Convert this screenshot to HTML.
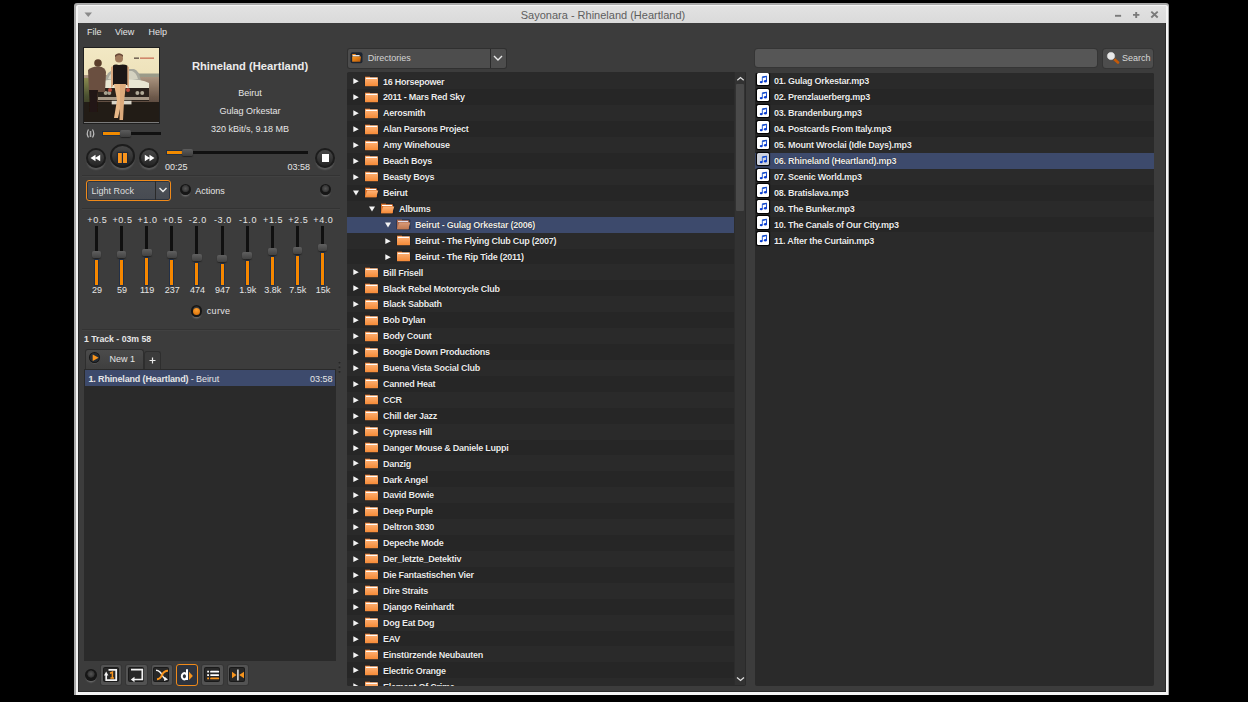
<!DOCTYPE html>
<html><head><meta charset="utf-8">
<style>
*{margin:0;padding:0;box-sizing:border-box}
html,body{width:1248px;height:702px;overflow:hidden;background:#000;font-family:"Liberation Sans",sans-serif;color:#e6e6e6}
.a{position:absolute}
#win{position:absolute;left:74px;top:3px;width:1095px;height:692px;background:#a9a9a9;border-radius:3px 3px 0 0}
#wwhite{position:absolute;left:76px;top:5px;width:1092px;height:690px;background:#f4f4f4;border-radius:2px 2px 0 0}
#tb{position:absolute;left:78px;top:6px;width:1088px;height:17px;background:linear-gradient(#e2e2e2,#dadada)}
#title{position:absolute;left:74px;top:4.8px;width:1058px;height:20px;line-height:20px;text-align:center;font-size:11px;color:#5e5e5e}
#cframe{position:absolute;left:78px;top:23px;width:1088px;height:669px;background:#2b2b2b}
#content{position:absolute;left:79px;top:23px;width:1086px;height:668px;background:#3c3c3c}
.menu{position:absolute;top:26px;font-size:9px;color:#e6e6e6;line-height:12px}
.t9{font-size:9px;line-height:12px;position:absolute;white-space:nowrap}
.sep{position:absolute;height:1px;background:#333;box-shadow:0 1px 0 #414141}
/* buttons */
.rb{position:absolute;border-radius:50%;background:linear-gradient(#474747,#3a3a3a 45%,#242424);border:2.3px solid #1c1c1c;box-shadow:0 2.5px 1.5px -0.5px #5a5a5a}
.slt{position:absolute;height:3px;background:#111}
.slo{position:absolute;height:3px;background:#f08a00;box-shadow:0 0 0 1px #223044}
.slh{position:absolute;width:11px;height:7px;border-radius:2px;background:linear-gradient(#5c5c5c,#3e3e3e);box-shadow:0 1px 1px #222}
.eql,.eqf{position:absolute;width:30px;text-align:center;font-size:9px;line-height:10px;white-space:nowrap}
.eql{top:215px;letter-spacing:0.6px}
.eqf{top:285px}
.eqt{position:absolute;top:226px;width:3px;height:59px;background:#101010}
.eqo{position:absolute;width:3px;background:#f58700;box-shadow:0 0 0 1px #223048}
.eqh{position:absolute;width:9.5px;height:7px;border-radius:2px;background:linear-gradient(#606060,#424242);box-shadow:0 1px 1px #252525}
.radio{position:absolute;width:11.5px;height:11.5px;border-radius:50%;background:radial-gradient(circle at 50% 42%,#545454 0,#3c3c3c 2.6px,#333 3.3px,#161616 3.9px,#161616 100%);box-shadow:0 2.5px 1.5px -1px #6a6a6a}
/* tree */
#tree{position:absolute;left:347px;top:72px;width:399px;height:613.7px;background:#2a2a2a;overflow:hidden;border-radius:2px}
#tree .rows{position:absolute;left:0;top:1.4px;width:387px;height:613px;overflow:hidden}
.row{position:absolute;left:0;width:100%;height:15.92px;font-weight:bold;font-size:9px;letter-spacing:-0.25px;line-height:15.92px;white-space:nowrap}
.row.ev{background:#2a2a2a}
.row.od{background:#262626}
.row.sel{background:#3d4a6c}
.row span{position:absolute;top:1.2px;color:#ebebeb;text-shadow:0 0 1px #000}
.ar{position:absolute;top:5px}
.ad{position:absolute;top:5.5px}
.fd{position:absolute;top:1.5px}
#vsb{position:absolute;left:387px;top:0;width:12px;height:613px;background:#323232;box-shadow:inset 1px 0 0 #2c2c2c,inset -1px 0 0 #2a2a2a}
#vsh{position:absolute;left:1.8px;top:11.5px;width:8px;height:127.5px;background:#4a4a4a;border-radius:1px}
/* file list */
#flist{position:absolute;left:755px;top:72.5px;width:398.5px;height:613px;background:#2a2a2a;border-radius:2px;overflow:hidden}
.mi{position:absolute;left:1.7px;top:-0.3px;width:12.6px;height:12.4px;background:#fff;border-radius:1.5px;box-shadow:0 0 1px 0.5px #000}
.mi svg{position:absolute;left:0;top:0}
.mis{background:#d4d8e0}
.mis{background:#cfd3dd}
#flist .row span{left:19px}
.bb{position:absolute;top:664.8px;width:20.5px;height:20.2px;background:#535353;border-radius:2px;box-shadow:0 0 0 1px #363636}
.bi{position:absolute;top:667.5px;width:14px;height:13.5px;background:#282828;border-radius:1px;box-shadow:0 0 0 1px #1a1a1a}
</style></head><body>
<svg width="0" height="0" style="position:absolute">
 <defs>
  <linearGradient id="fg" x1="0" y1="0" x2="0" y2="1"><stop offset="0" stop-color="#ffb378"/><stop offset="1" stop-color="#f58a36"/></linearGradient>
  <linearGradient id="fgs" x1="0" y1="0" x2="0" y2="1"><stop offset="0" stop-color="#d99a78"/><stop offset="1" stop-color="#c07850"/></linearGradient>
  <linearGradient id="ng" x1="0" y1="0" x2="1" y2="1"><stop offset="0" stop-color="#5a8ae8"/><stop offset="1" stop-color="#0838c0"/></linearGradient>
  <symbol id="mn" viewBox="0 0 13 13"><g transform="translate(2,1.6) scale(0.78)"><path d="M4.3 9.3 V3.4 L9.6 2.2 V8.2" stroke="url(#ng)" stroke-width="1.4" fill="none"/><path d="M4.3 3.4 L9.6 2.2" stroke="#1248c8" stroke-width="1.8"/><ellipse cx="2.9" cy="9.6" rx="1.9" ry="1.5" fill="#0a3ed0"/><ellipse cx="8.2" cy="8.5" rx="1.9" ry="1.5" fill="#0a3ed0"/></g></symbol>
  <symbol id="ar" viewBox="0 0 7 7"><path d="M0.3 0.3 L5.8 3.2 L0.3 6.1 Z" fill="#f4f4f4"/></symbol>
  <symbol id="ad" viewBox="0 0 7 7"><path d="M0 0.6 H6 L3 5.6 Z" fill="#f4f4f4"/></symbol>
  <symbol id="fc" viewBox="0 0 15 13"><rect x="0.3" y="1.2" width="14.2" height="10.6" rx="1.5" fill="#151c28" opacity="0.7"/><rect x="1" y="1.6" width="5" height="2" fill="#d8691e"/><rect x="1" y="2.3" width="13" height="9" rx="0.6" fill="url(#fg)"/><rect x="2" y="2.9" width="11" height="1.1" fill="#fff" opacity="0.95"/></symbol>
  <symbol id="fo" viewBox="0 0 15 13"><rect x="0.3" y="1.2" width="14.2" height="10.6" rx="1.5" fill="#151c28" opacity="0.7"/><rect x="1" y="1.6" width="5" height="2" fill="#d8691e"/><rect x="1" y="2.3" width="12" height="9" rx="0.6" fill="#d8702a"/><rect x="2" y="2.9" width="10" height="1.1" fill="#fff"/><path d="M3.2 4.6 H14.3 L12.2 11.3 H1 Z" fill="url(#fg)"/></symbol>
  <symbol id="fos" viewBox="0 0 15 13"><rect x="0.3" y="1.2" width="14.2" height="10.6" rx="1.5" fill="#151c28" opacity="0.5"/><rect x="1" y="1.6" width="5" height="2" fill="#a86a50"/><rect x="1" y="2.3" width="12" height="9" rx="0.6" fill="#a86a50"/><rect x="2" y="2.9" width="10" height="1.1" fill="#dde"/><path d="M3.2 4.6 H14.3 L12.2 11.3 H1 Z" fill="url(#fgs)"/></symbol>
 </defs>
</svg>
<div id="win"></div>
<div id="wwhite"></div>
<div id="tb"></div>
<div id="title">Sayonara - Rhineland (Heartland)</div>
<svg class="a" style="left:84px;top:11.7px" width="9" height="6"><path d="M0.5 0.5 H8 L4.25 5 Z" fill="#8a8a8a"/></svg>
<svg class="a" style="left:1112px;top:9px" width="50" height="12">
 <path d="M3 6.8 H9.1" stroke="#7a7a7a" stroke-width="1.9"/>
 <path d="M21 5.9 H27.4 M24.2 2.9 V8.9" stroke="#7a7a7a" stroke-width="1.9"/>
 <path d="M39.3 2.6 L45.7 8.5 M45.7 2.6 L39.3 8.5" stroke="#7a7a7a" stroke-width="1.9"/>
</svg>
<div id="cframe"></div>
<div id="content"></div>

<div class="menu" style="left:87px">File</div>
<div class="menu" style="left:115px">View</div>
<div class="menu" style="left:148.5px">Help</div>

<!-- album cover -->
<div class="a" style="left:83px;top:47px;width:77px;height:77px;background:#1f1f1f"></div>
<svg class="a" style="left:84px;top:48px" width="75" height="75" viewBox="0 0 75 75">
 <defs>
  <linearGradient id="sky" x1="0" y1="0" x2="0" y2="1"><stop offset="0" stop-color="#f2e8c4"/><stop offset="1" stop-color="#e6d7a8"/></linearGradient>
  <linearGradient id="road" x1="0" y1="0" x2="0" y2="1"><stop offset="0" stop-color="#b09a84"/><stop offset="0.45" stop-color="#6e5a4c"/><stop offset="1" stop-color="#2a1e16"/></linearGradient>
  <linearGradient id="grass" x1="0" y1="0" x2="0" y2="1"><stop offset="0" stop-color="#8a8a50"/><stop offset="0.4" stop-color="#4a5030"/><stop offset="1" stop-color="#1e1a12"/></linearGradient>
  <filter id="bl" x="-10%" y="-10%" width="120%" height="120%"><feGaussianBlur stdDeviation="0.7"/></filter>
 </defs>
 <rect width="75" height="75" fill="url(#sky)"/>
 <g filter="url(#bl)">
 <rect x="0" y="27" width="75" height="48" fill="url(#road)"/>
 <rect x="50" y="25.5" width="25" height="3.5" fill="#9a9a88"/>
 <rect x="0" y="30" width="10" height="45" fill="url(#grass)"/>
 <rect x="0" y="54" width="75" height="21" fill="#231a12"/>
 <path d="M21 33 Q23 22 32 21 L50 21 Q55 22 57 33 Z" fill="#a8a89c"/>
 <path d="M24 31 Q26 24 33 23 L48 23 Q52 24 54 31 Z" fill="#d4d2c0"/>
 <path d="M15 34 Q24 31 40 31 Q58 31 65 35 L65 41 L15 41 Z" fill="#e8e6d2"/>
 <rect x="14" y="40" width="51" height="13" fill="#2a201a"/>
 <circle cx="21.7" cy="45" r="2" fill="#a8a290"/><circle cx="25.3" cy="45" r="2" fill="#a8a290"/>
 <circle cx="53.4" cy="45" r="2" fill="#b0aa98"/><circle cx="58.2" cy="45" r="2" fill="#b0aa98"/>
 <rect x="14" y="49" width="51" height="3" fill="#a89a88"/>
 <rect x="27.7" y="52.8" width="19.8" height="3.6" fill="#d8d4c8"/>
 <path d="M4 22 Q8 18 15 18.5 Q21 19 22 24 L21 44 L5 44 Z" fill="#6a5040"/>
 <circle cx="14" cy="15" r="3.8" fill="#5a3e2c"/>
 <path d="M5 42 L14 42 L13 64 L6 64 Z" fill="#241812"/>
 <path d="M27 19 L29 18 L29 38 L27 40 Z M43 18 L45 19 L45 40 L43 38 Z" fill="#d8a880"/>
 <path d="M29 17.5 Q31 16 35 17 Q40 16 43.3 17.5 L43.3 36.7 Q36 39 29 36.7 Z" fill="#1c1412"/>
 <circle cx="35" cy="10.5" r="4" fill="#a07a5c"/>
 <path d="M31 9.5 Q35 5 39 9 L39 7 Q35 3.5 31 7 Z" fill="#6a4a38"/>
 <circle cx="26" cy="42" r="2" fill="#b84a3a"/><circle cx="44" cy="42" r="2" fill="#b84a3a"/>
 <path d="M30 36 L37 36 L38 52 L34 70 L30 70 L33 52 Z" fill="#e8b888"/>
 <path d="M36 36 L42 36 L40 54 L39 72 L35.5 72 L36 54 Z" fill="#dcaa7c"/>
 </g>
 <rect x="50" y="9.5" width="5" height="1.3" fill="#5a4a40"/>
 <rect x="56" y="9.5" width="14" height="1.3" fill="#c87058"/>
</svg>
<div class="a" style="left:84px;top:122px;width:75px;height:1px;background:#7a7a7a"></div>

<div class="a" style="left:170px;top:58.8px;width:160px;text-align:center;font-size:11.2px;font-weight:bold;line-height:14px;color:#ececec">Rhineland (Heartland)</div>
<div class="t9" style="left:170px;top:87px;width:160px;text-align:center">Beirut</div>
<div class="t9" style="left:170px;top:105px;width:160px;text-align:center">Gulag Orkestar</div>
<div class="t9" style="left:170px;top:123px;width:160px;text-align:center">320 kBit/s, 9.18 MB</div>

<!-- volume -->
<svg class="a" style="left:85px;top:128px" width="11" height="11"><path d="M3.5 1.5 Q1 5.5 3.5 9.5 M7.5 1.5 Q10 5.5 7.5 9.5" stroke="#bbb" stroke-width="1.2" fill="none"/><rect x="4.7" y="3" width="1.6" height="6" fill="#aaa"/></svg>
<div class="slt" style="left:103px;top:132px;width:58px"></div>
<div class="slo" style="left:103px;top:132px;width:17px"></div>
<div class="slh" style="left:119.5px;top:130px"></div>

<!-- controls -->
<div class="rb" style="left:86px;top:147.5px;width:20px;height:20px"></div>
<svg class="a" style="left:89px;top:153px" width="14" height="10"><path d="M1.5 5 L6.5 1.8 V8.2 Z M6 5 L11.2 1.8 V8.2 Z" fill="#fff"/></svg>
<div class="rb" style="left:109.7px;top:144.2px;width:25.5px;height:24px"></div>
<div class="a" style="left:117.5px;top:153.2px;width:4.2px;height:9.5px;background:#f7941d;box-shadow:0 0 1.5px 1px #1a2538"></div>
<div class="a" style="left:123px;top:153.2px;width:4.2px;height:9.5px;background:#f7941d;box-shadow:0 0 1.5px 1px #1a2538"></div>
<div class="rb" style="left:139px;top:147.5px;width:20px;height:20px"></div>
<svg class="a" style="left:143px;top:153px" width="14" height="10"><path d="M1.8 1.8 L7 5 L1.8 8.2 Z M6.5 1.8 L11.5 5 L6.5 8.2 Z" fill="#fff"/></svg>

<div class="slt" style="left:166.5px;top:150.5px;width:141px"></div>
<div class="slo" style="left:166.5px;top:150.5px;width:15px"></div>
<div class="slh" style="left:182px;top:148.5px"></div>
<div class="t9" style="left:165px;top:161px;">00:25</div>
<div class="t9" style="left:287.5px;top:161px;">03:58</div>

<div class="rb" style="left:315px;top:147.5px;width:20px;height:20px"></div>
<div class="a" style="left:321.5px;top:154px;width:7.5px;height:7.5px;background:#fff"></div>

<div class="sep" style="left:82px;top:175px;width:258px"></div>

<!-- preset combo -->
<div class="a" style="left:86px;top:180px;width:85px;height:21px;border:1.2px solid #f08a1a;border-radius:3px;background:linear-gradient(#4d5157,#474b52);box-shadow:inset 0 0 0 1px #2c3440"></div>
<div class="a" style="left:155px;top:181px;width:1px;height:19px;background:#2a2a2a"></div>
<svg class="a" style="left:158px;top:186px" width="10" height="8"><path d="M1.5 2 L5 5.5 L8.5 2" stroke="#eee" stroke-width="1.4" fill="none"/></svg>
<div class="t9" style="left:91.5px;top:184.5px;color:#dedede">Light Rock</div>
<div class="radio" style="left:179.7px;top:183.5px"></div>
<div class="t9" style="left:195.3px;top:184.5px">Actions</div>
<div class="radio" style="left:319.8px;top:183.5px"></div>
<div class="sep" style="left:82px;top:207.5px;width:258px"></div>

<div class="eql" style="left:82.40px">+0.5</div>
<div class="eqt" style="left:95.00px"></div>
<div class="eqo" style="left:95.00px;top:259.6px;height:25.4px"></div>
<div class="eqh" style="left:91.80px;top:250.6px"></div>
<div class="eqf" style="left:82.00px">29</div>
<div class="eql" style="left:107.51px">+0.5</div>
<div class="eqt" style="left:120.11px"></div>
<div class="eqo" style="left:120.11px;top:259.6px;height:25.4px"></div>
<div class="eqh" style="left:116.91px;top:250.6px"></div>
<div class="eqf" style="left:107.11px">59</div>
<div class="eql" style="left:132.62px">+1.0</div>
<div class="eqt" style="left:145.22px"></div>
<div class="eqo" style="left:145.22px;top:257.8px;height:27.2px"></div>
<div class="eqh" style="left:142.02px;top:248.8px"></div>
<div class="eqf" style="left:132.22px">119</div>
<div class="eql" style="left:157.73px">+0.5</div>
<div class="eqt" style="left:170.33px"></div>
<div class="eqo" style="left:170.33px;top:259.6px;height:25.4px"></div>
<div class="eqh" style="left:167.13px;top:250.6px"></div>
<div class="eqf" style="left:157.33px">237</div>
<div class="eql" style="left:182.84px">-2.0</div>
<div class="eqt" style="left:195.44px"></div>
<div class="eqo" style="left:195.44px;top:262.9px;height:22.1px"></div>
<div class="eqh" style="left:192.24px;top:253.9px"></div>
<div class="eqf" style="left:182.44px">474</div>
<div class="eql" style="left:207.95px">-3.0</div>
<div class="eqt" style="left:220.55px"></div>
<div class="eqo" style="left:220.55px;top:263.9px;height:21.1px"></div>
<div class="eqh" style="left:217.35px;top:254.9px"></div>
<div class="eqf" style="left:207.55px">947</div>
<div class="eql" style="left:233.06px">-1.0</div>
<div class="eqt" style="left:245.66px"></div>
<div class="eqo" style="left:245.66px;top:261.1px;height:23.9px"></div>
<div class="eqh" style="left:242.46px;top:252.1px"></div>
<div class="eqf" style="left:232.66px">1.9k</div>
<div class="eql" style="left:258.17px">+1.5</div>
<div class="eqt" style="left:270.77px"></div>
<div class="eqo" style="left:270.77px;top:257.1px;height:27.9px"></div>
<div class="eqh" style="left:267.57px;top:248.1px"></div>
<div class="eqf" style="left:257.77px">3.8k</div>
<div class="eql" style="left:283.28px">+2.5</div>
<div class="eqt" style="left:295.88px"></div>
<div class="eqo" style="left:295.88px;top:255.8px;height:29.2px"></div>
<div class="eqh" style="left:292.68px;top:246.8px"></div>
<div class="eqf" style="left:282.88px">7.5k</div>
<div class="eql" style="left:308.39px">+4.0</div>
<div class="eqt" style="left:320.99px"></div>
<div class="eqo" style="left:320.99px;top:252.8px;height:32.2px"></div>
<div class="eqh" style="left:317.79px;top:243.8px"></div>
<div class="eqf" style="left:307.99px">15k</div>

<div class="radio" style="left:190.9px;top:305.3px"></div>
<div class="a" style="left:193.1px;top:307.5px;width:7px;height:7px;border-radius:50%;background:radial-gradient(circle at 50% 30%,#ffa030,#e07a10 70%,#b85a08)"></div>
<div class="t9" style="left:206.8px;top:305.3px;letter-spacing:0.3px">curve</div>
<div class="sep" style="left:82px;top:329px;width:258px"></div>

<div class="t9" style="left:84px;top:333px;font-weight:bold;font-size:8.7px">1 Track - 03m 58</div>

<!-- tabs -->
<div class="a" style="left:84.5px;top:349.3px;width:59px;height:20px;background:linear-gradient(#4b4b4b,#3f3f3f);border:1px solid #2e2e2e;border-bottom:none;border-radius:3px 3px 0 0"></div>
<div class="a" style="left:89.3px;top:352.3px;width:11.2px;height:11.2px;border-radius:50%;background:radial-gradient(circle,#28303a 0,#232a33 55%,#141414 65%,#141414 100%);box-shadow:0 1.5px 1px -0.5px #555"></div>
<svg class="a" style="left:92px;top:354px" width="8" height="8"><path d="M0.7 0.6 L6.6 3.8 L0.7 7 Z" fill="#f7941d"/></svg>
<div class="t9" style="left:109.6px;top:353px">New 1</div>
<div class="a" style="left:143.9px;top:351px;width:17.5px;height:18.5px;background:#3b3b3b;border:1px solid #2e2e2e;border-bottom:none;border-radius:3px 3px 0 0"></div>
<svg class="a" style="left:149px;top:357px" width="7" height="7"><path d="M3.5 0.5 V6.5 M0.5 3.5 H6.5" stroke="#e8e8e8" stroke-width="1.2"/></svg>

<!-- playlist -->
<div class="a" style="left:84px;top:369px;width:252px;height:291.5px;background:#2a2a2a"></div>
<div class="a" style="left:85px;top:370px;width:249.5px;height:16px;background:#3d4a6c"></div>
<div class="t9" style="left:88.5px;top:372.5px;font-size:9px;letter-spacing:-0.1px"><b style="letter-spacing:-0.15px">1. Rhineland (Heartland)</b> - Beirut</div>
<div class="t9" style="left:272.5px;width:60px;text-align:right;top:372.5px;font-size:9px">03:58</div>
<svg class="a" style="left:337px;top:360px" width="5" height="14"><circle cx="2.5" cy="1.6" r="0.9" fill="#4a4a4a"/><circle cx="2.5" cy="2.6" r="1" fill="#262626"/><circle cx="2.5" cy="6.2" r="0.9" fill="#4a4a4a"/><circle cx="2.5" cy="7.2" r="1" fill="#262626"/><circle cx="2.5" cy="10.8" r="0.9" fill="#4a4a4a"/><circle cx="2.5" cy="11.8" r="1" fill="#262626"/></svg>

<!-- bottom buttons -->
<div class="radio" style="left:85.3px;top:669.3px"></div>
<div class="bb" style="left:100.5px"></div><div class="bi" style="left:103.5px"></div>
<div class="bb" style="left:126px"></div><div class="bi" style="left:128.5px"></div>
<div class="bb" style="left:151.5px"></div><div class="bi" style="left:154px"></div>
<div class="a" style="left:176.2px;top:664.2px;width:22.2px;height:21.8px;background:#2e343e;border:1.2px solid #f08a1a;border-radius:3px"></div>
<div class="bb" style="left:202.2px"></div><div class="bi" style="left:205px"></div>
<div class="bb" style="left:227.8px"></div><div class="bi" style="left:230.4px"></div>
<svg class="a" style="left:100px;top:660px" width="150" height="30">
 <path d="M8.5 9.8 H16.2 V20.2 H6.2 V14" stroke="#f4f4f4" stroke-width="1.7" fill="none"/>
 <path d="M4 15.5 L6.2 11.5 L8.4 15.5 Z" fill="#f4f4f4"/>
 <path d="M10 13.2 L12.4 12.2 V18 M10.4 18 H14" stroke="#f7941d" stroke-width="1.5" fill="none"/>
 <path d="M31 9.7 H42.3 V19.5 H34" stroke="#f4f4f4" stroke-width="1.7" fill="none"/>
 <path d="M34.5 16.8 L30.8 19.5 L34.5 22.2 Z" fill="#f4f4f4"/>
 <path d="M56 10.3 Q60 10.5 62 15 Q64 18.8 66 19" stroke="#f4f4f4" stroke-width="1.5" fill="none"/>
 <path d="M64.5 16.8 L68 19.5 L64 21 Z" fill="#f4f4f4"/>
 <path d="M57 19.2 Q60.5 19 62 15 Q63.8 10.8 68 10.8" stroke="#f7941d" stroke-width="2" fill="none"/>
 <path d="M87 9.3 V20 M87 16.3 A2.6 3.1 0 1 1 87 16.2" stroke="#fff" stroke-width="2" fill="none"/>
 <path d="M89 11.8 L92.9 16 L89 20 Z" fill="#f7941d"/>
 <path d="M107.2 11.7 H109 M107.2 15.1 H109" stroke="#fff" stroke-width="1.8"/>
 <path d="M111 11.7 H118.3 M111 15.1 H118.3" stroke="#fff" stroke-width="1.8" stroke-linecap="round"/>
 <path d="M107.2 18.4 H109" stroke="#f7941d" stroke-width="1.8"/>
 <path d="M111 18.4 H118.3" stroke="#f7941d" stroke-width="1.8" stroke-linecap="round"/>
 <path d="M137.9 9.5 V20.5" stroke="#ddd" stroke-width="1.6"/>
 <path d="M132 11.8 L136.5 15 L132 18.2 Z M144 11.8 L139.2 15 L144 18.2 Z" fill="#f7941d"/>
</svg>

<!-- directories combo -->
<div class="a" style="left:348px;top:48.5px;width:157.5px;height:19.5px;background:#4d4d4d;border-radius:2px;box-shadow:0 0 0 1px #303030"></div>
<div class="a" style="left:490.3px;top:48.5px;width:1.2px;height:19.5px;background:#2a2a2a"></div>
<svg class="a" style="left:492px;top:53px" width="12" height="10"><path d="M2 3 L6 7 L10 3" stroke="#e8e8e8" stroke-width="1.4" fill="none"/></svg>
<svg class="a" style="left:350px;top:52px" width="13" height="11.5">
 <defs><linearGradient id="dg" x1="0" y1="0" x2="1" y2="1"><stop offset="0" stop-color="#ff9a20"/><stop offset="1" stop-color="#b85808"/></linearGradient></defs>
 <rect x="0.5" y="0.2" width="12" height="11" rx="2" fill="#1c2430"/>
 <rect x="2.2" y="2" width="3.5" height="1.6" fill="#f08a20"/>
 <rect x="2.6" y="3" width="7" height="1.6" fill="#dfe6ee"/>
 <path d="M2.2 4.4 H11 L10.3 9.8 H2.2 Z" fill="url(#dg)"/>
</svg>
<div class="t9" style="left:367.8px;top:51.9px;color:#d4d4d4">Directories</div>

<div id="tree"><div class="rows">
<div class="row ev" style="top:0.00px"><svg class="ar" style="left:6.3px" width="7" height="7"><use href="#ar"/></svg><svg class="fd" style="left:17px" width="15" height="13"><use href="#fc"/></svg><span style="left:36px">16 Horsepower</span></div>
<div class="row od" style="top:15.92px"><svg class="ar" style="left:6.3px" width="7" height="7"><use href="#ar"/></svg><svg class="fd" style="left:17px" width="15" height="13"><use href="#fc"/></svg><span style="left:36px">2011 - Mars Red Sky</span></div>
<div class="row ev" style="top:31.84px"><svg class="ar" style="left:6.3px" width="7" height="7"><use href="#ar"/></svg><svg class="fd" style="left:17px" width="15" height="13"><use href="#fc"/></svg><span style="left:36px">Aerosmith</span></div>
<div class="row od" style="top:47.76px"><svg class="ar" style="left:6.3px" width="7" height="7"><use href="#ar"/></svg><svg class="fd" style="left:17px" width="15" height="13"><use href="#fc"/></svg><span style="left:36px">Alan Parsons Project</span></div>
<div class="row ev" style="top:63.68px"><svg class="ar" style="left:6.3px" width="7" height="7"><use href="#ar"/></svg><svg class="fd" style="left:17px" width="15" height="13"><use href="#fc"/></svg><span style="left:36px">Amy Winehouse</span></div>
<div class="row od" style="top:79.60px"><svg class="ar" style="left:6.3px" width="7" height="7"><use href="#ar"/></svg><svg class="fd" style="left:17px" width="15" height="13"><use href="#fc"/></svg><span style="left:36px">Beach Boys</span></div>
<div class="row ev" style="top:95.52px"><svg class="ar" style="left:6.3px" width="7" height="7"><use href="#ar"/></svg><svg class="fd" style="left:17px" width="15" height="13"><use href="#fc"/></svg><span style="left:36px">Beasty Boys</span></div>
<div class="row od" style="top:111.44px"><svg class="ad" style="left:6.3px" width="7" height="7"><use href="#ad"/></svg><svg class="fd" style="left:17px" width="15" height="13"><use href="#fo"/></svg><span style="left:36px">Beirut</span></div>
<div class="row ev" style="top:127.36px"><svg class="ad" style="left:22.3px" width="7" height="7"><use href="#ad"/></svg><svg class="fd" style="left:33px" width="15" height="13"><use href="#fo"/></svg><span style="left:52px">Albums</span></div>
<div class="row sel" style="top:143.28px"><svg class="ad" style="left:38.3px" width="7" height="7"><use href="#ad"/></svg><svg class="fd" style="left:49px" width="15" height="13"><use href="#fos"/></svg><span style="left:68px">Beirut - Gulag Orkestar (2006)</span></div>
<div class="row ev" style="top:159.20px"><svg class="ar" style="left:38.3px" width="7" height="7"><use href="#ar"/></svg><svg class="fd" style="left:49px" width="15" height="13"><use href="#fc"/></svg><span style="left:68px">Beirut - The Flying Club Cup (2007)</span></div>
<div class="row od" style="top:175.12px"><svg class="ar" style="left:38.3px" width="7" height="7"><use href="#ar"/></svg><svg class="fd" style="left:49px" width="15" height="13"><use href="#fc"/></svg><span style="left:68px">Beirut - The Rip Tide (2011)</span></div>
<div class="row ev" style="top:191.04px"><svg class="ar" style="left:6.3px" width="7" height="7"><use href="#ar"/></svg><svg class="fd" style="left:17px" width="15" height="13"><use href="#fc"/></svg><span style="left:36px">Bill Frisell</span></div>
<div class="row od" style="top:206.96px"><svg class="ar" style="left:6.3px" width="7" height="7"><use href="#ar"/></svg><svg class="fd" style="left:17px" width="15" height="13"><use href="#fc"/></svg><span style="left:36px">Black Rebel Motorcycle Club</span></div>
<div class="row ev" style="top:222.88px"><svg class="ar" style="left:6.3px" width="7" height="7"><use href="#ar"/></svg><svg class="fd" style="left:17px" width="15" height="13"><use href="#fc"/></svg><span style="left:36px">Black Sabbath</span></div>
<div class="row od" style="top:238.80px"><svg class="ar" style="left:6.3px" width="7" height="7"><use href="#ar"/></svg><svg class="fd" style="left:17px" width="15" height="13"><use href="#fc"/></svg><span style="left:36px">Bob Dylan</span></div>
<div class="row ev" style="top:254.72px"><svg class="ar" style="left:6.3px" width="7" height="7"><use href="#ar"/></svg><svg class="fd" style="left:17px" width="15" height="13"><use href="#fc"/></svg><span style="left:36px">Body Count</span></div>
<div class="row od" style="top:270.64px"><svg class="ar" style="left:6.3px" width="7" height="7"><use href="#ar"/></svg><svg class="fd" style="left:17px" width="15" height="13"><use href="#fc"/></svg><span style="left:36px">Boogie Down Productions</span></div>
<div class="row ev" style="top:286.56px"><svg class="ar" style="left:6.3px" width="7" height="7"><use href="#ar"/></svg><svg class="fd" style="left:17px" width="15" height="13"><use href="#fc"/></svg><span style="left:36px">Buena Vista Social Club</span></div>
<div class="row od" style="top:302.48px"><svg class="ar" style="left:6.3px" width="7" height="7"><use href="#ar"/></svg><svg class="fd" style="left:17px" width="15" height="13"><use href="#fc"/></svg><span style="left:36px">Canned Heat</span></div>
<div class="row ev" style="top:318.40px"><svg class="ar" style="left:6.3px" width="7" height="7"><use href="#ar"/></svg><svg class="fd" style="left:17px" width="15" height="13"><use href="#fc"/></svg><span style="left:36px">CCR</span></div>
<div class="row od" style="top:334.32px"><svg class="ar" style="left:6.3px" width="7" height="7"><use href="#ar"/></svg><svg class="fd" style="left:17px" width="15" height="13"><use href="#fc"/></svg><span style="left:36px">Chill der Jazz</span></div>
<div class="row ev" style="top:350.24px"><svg class="ar" style="left:6.3px" width="7" height="7"><use href="#ar"/></svg><svg class="fd" style="left:17px" width="15" height="13"><use href="#fc"/></svg><span style="left:36px">Cypress Hill</span></div>
<div class="row od" style="top:366.16px"><svg class="ar" style="left:6.3px" width="7" height="7"><use href="#ar"/></svg><svg class="fd" style="left:17px" width="15" height="13"><use href="#fc"/></svg><span style="left:36px">Danger Mouse &amp; Daniele Luppi</span></div>
<div class="row ev" style="top:382.08px"><svg class="ar" style="left:6.3px" width="7" height="7"><use href="#ar"/></svg><svg class="fd" style="left:17px" width="15" height="13"><use href="#fc"/></svg><span style="left:36px">Danzig</span></div>
<div class="row od" style="top:398.00px"><svg class="ar" style="left:6.3px" width="7" height="7"><use href="#ar"/></svg><svg class="fd" style="left:17px" width="15" height="13"><use href="#fc"/></svg><span style="left:36px">Dark Angel</span></div>
<div class="row ev" style="top:413.92px"><svg class="ar" style="left:6.3px" width="7" height="7"><use href="#ar"/></svg><svg class="fd" style="left:17px" width="15" height="13"><use href="#fc"/></svg><span style="left:36px">David Bowie</span></div>
<div class="row od" style="top:429.84px"><svg class="ar" style="left:6.3px" width="7" height="7"><use href="#ar"/></svg><svg class="fd" style="left:17px" width="15" height="13"><use href="#fc"/></svg><span style="left:36px">Deep Purple</span></div>
<div class="row ev" style="top:445.76px"><svg class="ar" style="left:6.3px" width="7" height="7"><use href="#ar"/></svg><svg class="fd" style="left:17px" width="15" height="13"><use href="#fc"/></svg><span style="left:36px">Deltron 3030</span></div>
<div class="row od" style="top:461.68px"><svg class="ar" style="left:6.3px" width="7" height="7"><use href="#ar"/></svg><svg class="fd" style="left:17px" width="15" height="13"><use href="#fc"/></svg><span style="left:36px">Depeche Mode</span></div>
<div class="row ev" style="top:477.60px"><svg class="ar" style="left:6.3px" width="7" height="7"><use href="#ar"/></svg><svg class="fd" style="left:17px" width="15" height="13"><use href="#fc"/></svg><span style="left:36px">Der_letzte_Detektiv</span></div>
<div class="row od" style="top:493.52px"><svg class="ar" style="left:6.3px" width="7" height="7"><use href="#ar"/></svg><svg class="fd" style="left:17px" width="15" height="13"><use href="#fc"/></svg><span style="left:36px">Die Fantastischen Vier</span></div>
<div class="row ev" style="top:509.44px"><svg class="ar" style="left:6.3px" width="7" height="7"><use href="#ar"/></svg><svg class="fd" style="left:17px" width="15" height="13"><use href="#fc"/></svg><span style="left:36px">Dire Straits</span></div>
<div class="row od" style="top:525.36px"><svg class="ar" style="left:6.3px" width="7" height="7"><use href="#ar"/></svg><svg class="fd" style="left:17px" width="15" height="13"><use href="#fc"/></svg><span style="left:36px">Django Reinhardt</span></div>
<div class="row ev" style="top:541.28px"><svg class="ar" style="left:6.3px" width="7" height="7"><use href="#ar"/></svg><svg class="fd" style="left:17px" width="15" height="13"><use href="#fc"/></svg><span style="left:36px">Dog Eat Dog</span></div>
<div class="row od" style="top:557.20px"><svg class="ar" style="left:6.3px" width="7" height="7"><use href="#ar"/></svg><svg class="fd" style="left:17px" width="15" height="13"><use href="#fc"/></svg><span style="left:36px">EAV</span></div>
<div class="row ev" style="top:573.12px"><svg class="ar" style="left:6.3px" width="7" height="7"><use href="#ar"/></svg><svg class="fd" style="left:17px" width="15" height="13"><use href="#fc"/></svg><span style="left:36px">Einst&uuml;rzende Neubauten</span></div>
<div class="row od" style="top:589.04px"><svg class="ar" style="left:6.3px" width="7" height="7"><use href="#ar"/></svg><svg class="fd" style="left:17px" width="15" height="13"><use href="#fc"/></svg><span style="left:36px">Electric Orange</span></div>
<div class="row ev" style="top:604.96px"><svg class="ar" style="left:6.3px" width="7" height="7"><use href="#ar"/></svg><svg class="fd" style="left:17px" width="15" height="13"><use href="#fc"/></svg><span style="left:36px">Element Of Crime</span></div>
</div>
<div id="vsb"><div id="vsh"></div>
<svg class="a" style="left:2px;top:3.5px" width="9" height="6"><path d="M1.3 4.3 L4.5 1.5 L7.7 4.3" stroke="#ddd" stroke-width="1.2" fill="none"/></svg>
<svg class="a" style="left:2px;top:604px" width="9" height="6"><path d="M1 1.5 L4.5 4.5 L8 1.5" stroke="#ddd" stroke-width="1.3" fill="none"/></svg>
</div>
</div>

<!-- search -->
<div class="a" style="left:755px;top:49px;width:341.5px;height:18px;background:#565656;border-radius:3px;box-shadow:0 0 0 1px #353535"></div>
<div class="a" style="left:1103px;top:48.5px;width:50px;height:19px;background:#4d4d4d;border-radius:3px;box-shadow:0 0 0 1px #353535"></div>
<svg class="a" style="left:1105px;top:51px" width="15" height="13">
 <path d="M8.5 7.5 L13 11.5" stroke="#c65a08" stroke-width="2.6" stroke-linecap="round"/>
 <circle cx="6" cy="5" r="4.3" fill="#e8e8e8" stroke="#444" stroke-width="0.8"/>
</svg>
<div class="t9" style="left:1122px;top:52px;color:#d8d8d8">Search</div>

<div id="flist"><div class="a" style="left:0;top:0.8px;width:100%;height:600px">
<div class="row ev" style="top:0.00px"><i class="mi"><svg width="13" height="13"><use href="#mn"/></svg></i><span>01. Gulag Orkestar.mp3</span></div>
<div class="row od" style="top:15.92px"><i class="mi"><svg width="13" height="13"><use href="#mn"/></svg></i><span>02. Prenzlauerberg.mp3</span></div>
<div class="row ev" style="top:31.84px"><i class="mi"><svg width="13" height="13"><use href="#mn"/></svg></i><span>03. Brandenburg.mp3</span></div>
<div class="row od" style="top:47.76px"><i class="mi"><svg width="13" height="13"><use href="#mn"/></svg></i><span>04. Postcards From Italy.mp3</span></div>
<div class="row ev" style="top:63.68px"><i class="mi"><svg width="13" height="13"><use href="#mn"/></svg></i><span>05. Mount Wroclai (Idle Days).mp3</span></div>
<div class="row sel" style="top:79.60px"><i class="mi mis"><svg width="13" height="13"><use href="#mn"/></svg></i><span>06. Rhineland (Heartland).mp3</span></div>
<div class="row ev" style="top:95.52px"><i class="mi"><svg width="13" height="13"><use href="#mn"/></svg></i><span>07. Scenic World.mp3</span></div>
<div class="row od" style="top:111.44px"><i class="mi"><svg width="13" height="13"><use href="#mn"/></svg></i><span>08. Bratislava.mp3</span></div>
<div class="row ev" style="top:127.36px"><i class="mi"><svg width="13" height="13"><use href="#mn"/></svg></i><span>09. The Bunker.mp3</span></div>
<div class="row od" style="top:143.28px"><i class="mi"><svg width="13" height="13"><use href="#mn"/></svg></i><span>10. The Canals of Our City.mp3</span></div>
<div class="row ev" style="top:159.20px"><i class="mi"><svg width="13" height="13"><use href="#mn"/></svg></i><span>11. After the Curtain.mp3</span></div>
</div></div>

</body></html>
